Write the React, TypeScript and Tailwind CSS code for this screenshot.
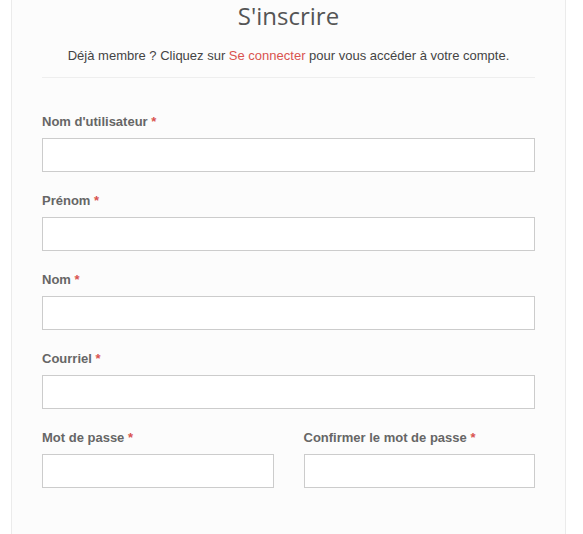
import React from "react";

function Field({ label }: { label: string }) {
  return (
    <div className="flex flex-col">
      <label className="text-[13px] leading-[18px] font-bold text-[#666]" style={{}}>
        {label} <span className="text-[#d9534f]">*</span>
      </label>
      <input
        type="text"
        className="mt-[7px] h-[34px] w-full border border-[#ccc] bg-white outline-none"
      />
    </div>
  );
}

export default function App() {
  return (
    <div className="min-h-[534px] bg-white" style={{ fontFamily: '"Liberation Sans", Arial, sans-serif' }}>
      <div className="ml-[11px] w-[555px] min-h-[534px] border-x border-[#ebebeb] bg-[#fcfcfc] px-[30px]">
        <h1
          className="text-center text-[24px] leading-[32px] text-[#555]"
          style={{ fontFamily: '"Open Sans", sans-serif' }}
        >
          S'inscrire
        </h1>
        <p className="mt-[15px] text-center text-[13px] leading-[18px] text-[#444]">
          Déjà membre ? Cliquez sur <a className="text-[#d9534f]">Se connecter</a> pour vous accéder à votre compte.
        </p>
        <div className="mt-[12px] border-t border-[#eee]" />
        <div className="mt-[35px] flex flex-col gap-[20px]">
          <Field label="Nom d'utilisateur" />
          <Field label="Prénom" />
          <Field label="Nom" />
          <Field label="Courriel" />
          <div className="grid grid-cols-2 gap-[30px]">
            <Field label="Mot de passe" />
            <Field label="Confirmer le mot de passe" />
          </div>
        </div>
      </div>
    </div>
  );
}
